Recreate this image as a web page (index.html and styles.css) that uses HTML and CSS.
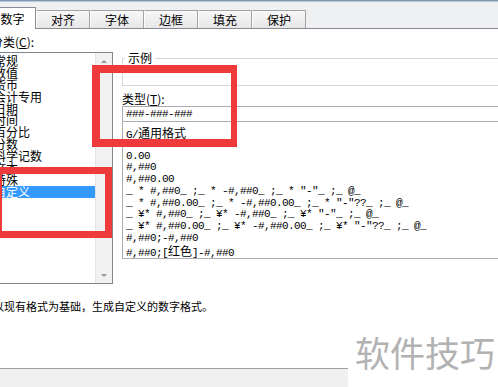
FILE: index.html
```html
<!DOCTYPE html>
<html lang="zh-CN">
<head>
<meta charset="utf-8">
<title>设置单元格格式</title>
<link rel="stylesheet" href="styles.css">
</head>
<body>
<div class="topline"></div>
<div class="tabbar">
  <div class="tab active">数字</div>
  <div class="tab">对齐</div>
  <div class="tab">字体</div>
  <div class="tab">边框</div>
  <div class="tab">填充</div>
  <div class="tab">保护</div>
</div>
<div class="panel">
  <div class="left">
    <div class="label cat">分类(<u>C</u>):</div>
    <div class="listbox">
      <ul class="items">
        <li>常规</li>
        <li>数值</li>
        <li>货币</li>
        <li>会计专用</li>
        <li>日期</li>
        <li>时间</li>
        <li>百分比</li>
        <li>分数</li>
        <li>科学记数</li>
        <li>文本</li>
        <li>特殊</li>
        <li class="sel">自定义</li>
      </ul>
      <div class="scrollbar"><span class="arrow up"></span><span class="arrow down"></span></div>
    </div>
  </div>
  <div class="right">
    <fieldset class="sample"><legend>示例</legend><div class="sample-body"></div></fieldset>
    <div class="label type">类型(<u>T</u>):</div>
    <div class="input mono">###-###-###</div>
    <ul class="fmtlist mono">
      <li>G/<span class="cjk">通用格式</span></li>
      <li>0</li>
      <li>0.00</li>
      <li>#,##0</li>
      <li>#,##0.00</li>
      <li>_ * #,##0_ ;_ * -#,##0_ ;_ * "-"_ ;_ @_</li>
      <li>_ * #,##0.00_ ;_ * -#,##0.00_ ;_ * "-"??_ ;_ @_</li>
      <li>_ ¥* #,##0_ ;_ ¥* -#,##0_ ;_ ¥* "-"_ ;_ @_</li>
      <li>_ ¥* #,##0.00_ ;_ ¥* -#,##0.00_ ;_ ¥* "-"??_ ;_ @_</li>
      <li>#,##0;-#,##0</li>
      <li>#,##0;[<span class="cjk">红色</span>]-#,##0</li>
    </ul>
  </div>
</div>
<p class="desc">以现有格式为基础，生成自定义的数字格式。</p>
<div class="footer"></div>
<div class="redbox r1"></div>
<div class="redbox r2"></div>
<div class="watermark">软件技巧</div>
</body>
</html>
```
FILE: styles.css
```css
* { box-sizing: border-box; }
html, body { margin: 0; padding: 0; }
body {
  width: 498px;
  height: 387px;
  overflow: hidden;
  position: relative;
  background: #fff;
  color: #000;
  font-family: "Noto Sans CJK SC", sans-serif;
  font-size: 12px;
  line-height: 12px;
}
.topline { height: 2px; background: #7e94b2; border-bottom: 1px solid #b9c6d6; }
.tabbar {
  height: 27px;
  background: #eef0f2;
  border-bottom: 1px solid #898c95;
  display: flex;
  align-items: flex-end;
}
.tab {
  flex: none;
  width: 54px;
  height: 18px;
  border: 1px solid #a3a3a3;
  border-bottom: none;
  border-left-color: #fbfbfb;
  background: linear-gradient(#f7f7f7, #e6e6e6);
  display: flex;
  align-items: center;
  justify-content: center;
  padding-top: 1px;
}
.tab.active {
  width: 46px;
  height: 22px;
  margin-left: -10px;
  margin-bottom: -1px;
  background: #fff;
  border-color: #898c95;
  border-left: none;
  position: relative;
  z-index: 1;
  padding-top: 0;
}
.panel { display: flex; align-items: flex-start; }
.left { flex: none; width: 125px; margin-left: -12px; }
.label { height: 12px; white-space: nowrap; }
.cat { margin-top: 7px; padding-left: 3px; }
.listbox {
  margin-top: 4px;
  height: 232px;
  border: 1px solid #828790;
  display: flex;
}
.items {
  flex: 1;
  list-style: none;
  margin: 0;
  padding: 2px 0 0 0;
}
.items li { line-height: 11.9px; height: 11.9px; padding-left: 5px; white-space: nowrap; }
.items li.sel { background: #3399ff; color: #fff; }
.scrollbar {
  flex: none;
  width: 17px;
  background: #f1f1f1;
  border-left: 1px solid #e4e4e4;
  display: flex;
  flex-direction: column;
  justify-content: space-between;
  align-items: center;
  padding: 7px 0 6px;
}
.arrow { width: 0; height: 0; border-left: 3px solid transparent; border-right: 3px solid transparent; }
.arrow.up { border-bottom: 3px solid #9a9a9a; }
.arrow.down { border-top: 3px solid #9a9a9a; }
.right { flex: none; width: 420px; margin-left: 9px; }
.sample {
  margin: 23px 0 0;
  padding: 0;
  border: 1px solid #d8d8d8;
  min-width: 0;
}
.sample legend { padding: 0 3px; margin-left: 2px; line-height: 12px; }
.sample-body { height: 21px; }
.type { margin-top: 7px; }
.mono {
  font-family: "Liberation Mono", "Noto Sans CJK SC", monospace;
  font-size: 11px;
  letter-spacing: -0.6px;
}
.cjk { font-family: "Noto Sans CJK SC", sans-serif; font-size: 12px; letter-spacing: 0; }
.input {
  margin-top: 1px;
  height: 15px;
  border: 1px solid #abadb3;
  border-bottom: none;
  padding-left: 3px;
  line-height: 14px;
  white-space: pre;
}
.fmtlist {
  list-style: none;
  margin: 0;
  height: 138px;
  border: 1px solid #abadb3;
  padding: 5px 0 0 3px;
}
.fmtlist li { height: 11.75px; line-height: 11.75px; white-space: pre; }
.desc {
  margin: 16px 0 0 -7px;
  font-size: 11px;
  line-height: 12px;
  white-space: nowrap;
}
.footer {
  margin-top: 56px;
  width: 348px;
  height: 19px;
  border-top: 1px solid #a0a0a0;
  background: #f0f0f0;
}
.redbox { position: absolute; border: 8px solid #ee3a3a; z-index: 5; }
.r1 { left: 92px; top: 65px; width: 145px; height: 82px; border-right-width: 6px; }
.r2 { left: -6px; top: 167px; width: 118px; height: 71px; border-top-width: 7px; border-right-width: 7px; border-bottom-width: 7px; }
.watermark {
  position: absolute;
  left: 355px;
  top: 334px;
  font-size: 35px;
  line-height: 36px;
  color: #b2b2b2;
  white-space: nowrap;
  z-index: 6;
}
```
